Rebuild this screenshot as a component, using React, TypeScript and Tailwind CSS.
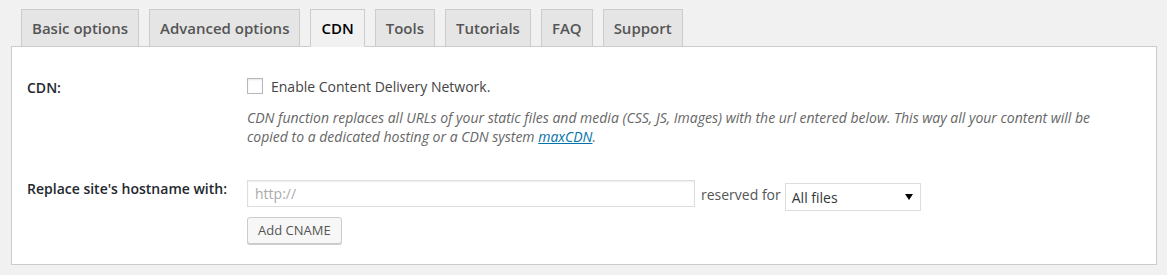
import React from 'react';

const tabs = ['Basic options', 'Advanced options', 'CDN', 'Tools', 'Tutorials', 'FAQ', 'Support'];

const App = () => {
  const active = 'CDN';

  return (
    <div className="w-[1167px] h-[275px] bg-[#f1f1f1] pt-[9px] pl-[11px] pr-[10px] font-['Open_Sans',sans-serif] text-[14px] text-[#444]">
      {/* Tabs */}
      <div className="flex items-end pl-[10px] gap-[10px] relative z-10">
        {tabs.map(t => (
          <div
            key={t}
            className={`h-[38px] flex items-center px-[10px] border border-[#ccc] text-[15px] font-semibold ${
              t === active ? 'bg-[#f1f1f1] text-black border-b-[#f1f1f1]' : 'bg-[#e5e5e5] text-[#555]'
            }`}
          >
            {t}
          </div>
        ))}
      </div>

      {/* Panel */}
      <div className="-mt-px bg-white border border-[#ccc] h-[219px] px-[15px] pt-[29px]">
        <div className="flex">
          <div className="w-[220px] shrink-0 pt-[2px] leading-[20px] font-semibold text-[#23282d]">CDN:</div>
          <div className="flex-1">
            <label className="flex items-center h-[20px] gap-[8px]">
              <span className="w-[16px] h-[16px] border border-[#b4b9be] bg-white shadow-[inset_0_1px_2px_rgba(0,0,0,0.1)]" />
              <span className="text-[#444]">Enable Content Delivery Network.</span>
            </label>
            <p className="mt-[12px] italic text-[#666] leading-[19px]">
              CDN function replaces all URLs of your static files and media (CSS, JS, Images) with the url entered below. This way all your content will be
              <br />
              copied to a dedicated hosting or a CDN system{' '}
              <a href="#" className="text-[#0073aa] underline">maxCDN</a>.
            </p>
          </div>
        </div>

        <div className="flex mt-[34px]">
          <div className="w-[220px] shrink-0 leading-[20px] font-semibold text-[#23282d] -mt-[1px]">
            Replace site's hostname with:
          </div>
          <div className="flex-1">
            <div className="flex items-start">
              <div className="w-[448px] h-[27px] border border-[#ddd] shadow-[inset_0_1px_2px_rgba(0,0,0,0.07)] flex items-center px-[7px] text-[#aaa]">
                http://
              </div>
              <span className="ml-[6px] mt-[5px] leading-[20px] text-[#555]">reserved for</span>
              <div className="ml-[4px] mt-[3px] w-[136px] h-[28px] border border-[#ddd] bg-white flex items-center justify-between pl-[6px] pr-[7px] text-[#32373c]">
                <span>All files</span>
                <svg width="8" height="6" viewBox="0 0 8 6"><path d="M0 0h8L4 6z" fill="#000" /></svg>
              </div>
            </div>
            <button className="mt-[6px] h-[27px] px-[10px] border border-[#ccc] rounded-[3px] bg-[#f7f7f7] shadow-[0_1px_0_#ccc] text-[13px] text-[#555]">
              Add CNAME
            </button>
          </div>
        </div>
      </div>
    </div>
  );
};

export default App;
